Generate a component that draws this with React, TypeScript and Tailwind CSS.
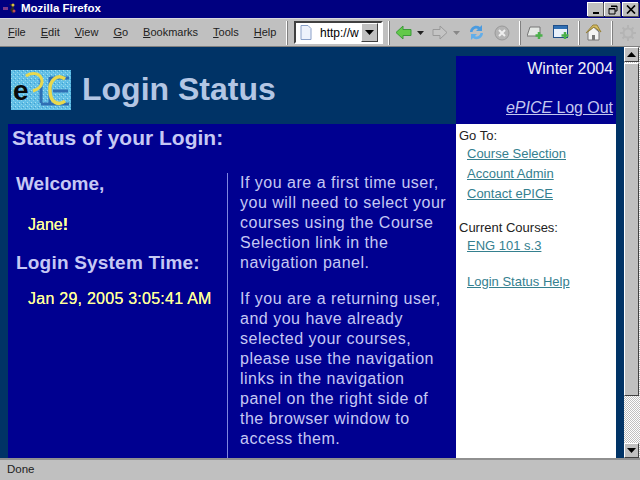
const menuItems = ["File", "Edit", "View", "Go", "Bookmarks", "Tools", "Help"];

function Separator({ ml, mr }: { ml: string; mr: string }) {
  return <div className={`h-[24px] w-[2px] border-l border-white bg-[#808080] ${ml} ${mr}`} />;
}

function DropArrow({ color }: { color: string }) {
  return (
    <svg width="7" height="4" viewBox="0 0 7 4" className="mx-[5px]">
      <path d="M0 0h7L3.5 4z" fill={color} />
    </svg>
  );
}

function WinButton({ children, ml }: { children: React.ReactNode; ml: string }) {
  return (
    <div className={`flex h-[14px] w-[16px] items-center justify-center border-t border-l border-t-white border-l-white bg-[#c0c0c0] shadow-[1px_1px_0_#555] ${ml}`}>
      {children}
    </div>
  );
}

function Logo() {
  return (
    <svg width="60" height="40" viewBox="0 0 60 40" className="shrink-0">
      <defs>
        <pattern id="speck" width="4" height="4" patternUnits="userSpaceOnUse">
          <rect width="4" height="4" fill="#62bfe6" />
          <rect width="1" height="1" fill="#a6e0f2" />
          <rect x="2" y="2" width="1" height="1" fill="#8fd5ee" />
          <rect x="3" y="1" width="1" height="1" fill="#3f9fd0" />
        </pattern>
      </defs>
      <rect width="60" height="40" fill="url(#speck)" />
      <path d="M30 8v25M39 7v26M30 34h28M39 8h19M42 21h15" fill="none" stroke="#2f6fb4" strokeWidth="3" />
      <path d="M15 6 C20 2 30 2 31 11 C31 17 27 19 22 21" fill="none" stroke="#e8d84e" strokeWidth="3" />
      <path d="M54 9 C46 3 38 11 39 21 C39 33 48 36 54 31" fill="none" stroke="#e8d84e" strokeWidth="3.5" />
      <text x="2" y="30" fontFamily="Liberation Sans, sans-serif" fontSize="28" fontWeight="bold" fill="#0a0a0a">e</text>
    </svg>
  );
}

function SideLink({ children, mt }: { children: React.ReactNode; mt: string }) {
  return <a className={`ml-[8px] block h-[20px] leading-[20px] text-[#35808f] underline ${mt}`}>{children}</a>;
}

export default function App() {
  return (
    <div className="flex h-[480px] w-[640px] flex-col overflow-hidden bg-[#c0c0c0] font-['Liberation_Sans',sans-serif]">
      {/* barre de titre */}
      <div className="flex h-[18px] items-center bg-[#000080] pl-[2px] pr-[2px]">
        <svg width="15" height="14" viewBox="0 0 15 14">
          <path d="M1 5h5v3H1z" fill="#7a3a8a" />
          <path d="M7 2l3 3-2 3 3 4 1-6-2-4z" fill="#2a2a2a" />
          <circle cx="11" cy="3" r="1.5" fill="#d8c040" />
          <circle cx="12" cy="9" r="1.5" fill="#c05050" />
        </svg>
        <span className="ml-[4px] text-[11.5px] font-bold text-white">Mozilla Firefox</span>
        <div className="flex-1" />
        <WinButton ml="ml-0">
          <div className="mt-[7px] h-[2px] w-[6px] bg-black" />
        </WinButton>
        <WinButton ml="ml-[1px]">
          <svg width="10" height="10" viewBox="0 0 10 10">
            <path d="M3 1h6v5H7M1 3.5h6V9H1z" fill="none" stroke="#000" />
            <path d="M3 1.5h6M1 4h6" stroke="#000" />
          </svg>
        </WinButton>
        <WinButton ml="ml-[2px]">
          <svg width="10" height="9" viewBox="0 0 10 9">
            <path d="M1 0.5l8 8M9 0.5l-8 8" stroke="#000" strokeWidth="1.7" />
          </svg>
        </WinButton>
      </div>

      {/* barre d'outils */}
      <div className="flex h-[29px] items-center border-t border-b border-t-[#d8d8e0] border-b-[#808080] pl-[8px]">
        <div className="flex w-[277px] gap-[15px] text-[11px] text-[#222]">
          {menuItems.map((item) => (
            <span key={item}>
              <span className="underline">{item[0]}</span>
              {item.slice(1)}
            </span>
          ))}
        </div>
        <Separator ml="ml-[1px]" mr="mr-[6px]" />
        <div className="flex h-[23px] w-[89px] items-center border-2 border-t-[#404040] border-l-[#404040] border-r-white border-b-white bg-white">
          <svg width="12" height="15" viewBox="0 0 12 15" className="ml-[4px]">
            <path d="M1 .5h7l3 3v11H1z" fill="#eef2fb" stroke="#8aa0c8" />
          </svg>
          <span className="ml-[8px] w-[41px] overflow-hidden text-[12px] whitespace-nowrap text-black">http://w</span>
          <div className="flex h-[19px] w-[17px] items-center justify-center border border-t-white border-l-white border-r-[#404040] border-b-[#404040] bg-[#c0c0c0]">
            <svg width="9" height="5" viewBox="0 0 9 5">
              <path d="M0 0h9L4.5 5z" fill="#000" />
            </svg>
          </div>
        </div>
        <Separator ml="ml-[5px]" mr="mr-[5px]" />
        <svg width="17" height="15" viewBox="0 0 17 15">
          <path d="M1 7.500 8 1v3.500h8v6H8V14z" fill="#62c94a" stroke="#3d9a3a" />
        </svg>
        <DropArrow color="#222" />
        <svg width="16" height="15" viewBox="0 0 16 15" className="ml-[3px]">
          <path d="M15 7.500 8 1v3.500H1v6h7V14z" fill="#c4c4c4" stroke="#999" />
        </svg>
        <DropArrow color="#888" />
        <svg width="17" height="17" viewBox="0 0 17 17" className="ml-[3px]">
          <path d="M2 8C2 3 8 0 12 3l2-2v6H8l2-2C8 3.500 5 5 4.500 8z" fill="#4a9be0" />
          <path d="M15 9c0 5-6 8-10 5l-2 2v-6h6l-2 2c2 1.500 5 0 5.500-3z" fill="#62aeea" />
        </svg>
        <svg width="16" height="16" viewBox="0 0 16 16" className="ml-[9px]">
          <circle cx="8" cy="8" r="7" fill="#b4b4b4" stroke="#999" />
          <path d="M5 5l6 6M11 5l-6 6" stroke="#eee" strokeWidth="2" />
        </svg>
        <Separator ml="ml-[9px]" mr="mr-[6px]" />
        <svg width="16" height="14" viewBox="0 0 16 14">
          <path d="M3 1h10v9H0z" fill="#e4e8e4" stroke="#777" />
          <path d="M12 6v7M8.500 9.500h7" stroke="#4ab04a" strokeWidth="2.500" />
        </svg>
        <svg width="16" height="15" viewBox="0 0 16 15" className="ml-[10px]">
          <rect x=".5" y=".5" width="14" height="12" fill="#e8f0fa" stroke="#1f4e88" />
          <rect x="1" y="1" width="13" height="3" fill="#2f6fb4" />
          <path d="M12 7v7M8.500 10.500h7" stroke="#4ab04a" strokeWidth="2.500" />
        </svg>
        <Separator ml="ml-[9px]" mr="mr-[5px]" />
        <svg width="17" height="17" viewBox="0 0 17 17">
          <path d="M3 8v8h11V8L8.500 3z" fill="#f4f4f4" stroke="#777" />
          <path d="M1 9 8 1h4l4 7-7-5z" fill="#d8bf62" stroke="#97813a" />
          <rect x="7" y="11" width="3" height="5" fill="#777" />
        </svg>
        <Separator ml="ml-[9px]" mr="mr-[7px]" />
        <svg width="16" height="16" viewBox="0 0 16 16">
          <circle cx="8" cy="8" r="4.500" fill="none" stroke="#b4b4b4" strokeWidth="2" />
          <path d="M8 0v3M8 13v3M0 8h3M13 8h3M2.500 2.500l2 2M11.500 11.500l2 2M13.500 2.500l-2 2M4.500 11.500l-2 2" stroke="#b4b4b4" strokeWidth="2" />
        </svg>
      </div>

      {/* page */}
      <div className="flex h-[411px]">
        <div className="flex w-[624px] flex-col bg-[#003366]">
          <div className="flex h-[77px]">
            <div className="flex flex-1 items-start pl-[11px] pt-[23px]">
              <Logo />
              <h1 className="ml-[11px] -mt-px text-[32px] leading-[40px] font-bold text-[#b3c6e4]">Login Status</h1>
            </div>
            <div className="mt-[9px] mr-[8px] w-[160px] bg-[#000090] pr-[3px] text-right text-[16px] tracking-[-0.05px]">
              <p className="mt-[4px] leading-[18px] text-[#f0f0f8]">Winter 2004</p>
              <p className="mt-[21px] leading-[18px] text-[#c4c8f0] underline">
                <i>ePICE</i> Log Out
              </p>
            </div>
          </div>
          <div className="mx-[8px] flex flex-1">
            <div className="flex w-[448px] flex-col bg-[#000090] text-[#c6c8f4]">
              <h2 className="ml-[4px] mt-[2px] text-[21px] leading-[24px] font-bold">Status of your Login:</h2>
              <div className="mt-[23px] flex flex-1">
                <div className="w-[219px] pl-[8px]">
                  <p className="mt-[1px] text-[19px] leading-[20px] font-bold">Welcome,</p>
                  <p className="ml-[12px] mt-[21px] text-[16px] leading-[20px] text-[#ffff99] [text-shadow:0_0_0.6px_#ffff99]">
                    Jane<b className="font-bold">!</b>
                  </p>
                  <p className="mt-[18px] text-[19px] leading-[20px] font-bold tracking-[0.2px]">Login System Time:</p>
                  <p className="ml-[12px] mt-[16px] text-[16px] leading-[20px] tracking-[0.25px] text-[#ffff99] [text-shadow:0_0_0.6px_#ffff99]">Jan 29, 2005 3:05:41 AM</p>
                </div>
                <div className="flex-1 border-l border-[#7f86e0] pl-[12px] pr-[7px] text-[16px] leading-[20px] tracking-[0.5px]">
                  <p>If you are a first time user, you will need to select your courses using the Course Selection link in the navigation panel.</p>
                  <p className="mt-[16px]">If you are a returning user, and you have already selected your courses, please use the navigation links in the navigation panel on the right side of the browser window to access them.</p>
                </div>
              </div>
            </div>
            <div className="w-[160px] bg-white pl-[3px] pt-[4px] text-[13px] text-[#222]">
              <p className="h-[16px] leading-[16px]">Go To:</p>
              <SideLink mt="mt-0">Course Selection</SideLink>
              <SideLink mt="mt-0">Account Admin</SideLink>
              <SideLink mt="mt-0">Contact ePICE</SideLink>
              <p className="mt-[16px] h-[16px] leading-[16px]">Current Courses:</p>
              <SideLink mt="mt-0">ENG 101 s.3</SideLink>
              <SideLink mt="mt-[16px]">Login Status Help</SideLink>
            </div>
          </div>
        </div>

        {/* ascenseur */}
        <div className="flex w-[16px] flex-col bg-[repeating-conic-gradient(#c0c0c0_0%_25%,#ffffff_0%_50%)] bg-[length:2px_2px] pr-[1px]">
          <div className="flex h-[15px] items-center justify-center border border-t-white border-l-white border-r-[#404040] border-b-[#404040] bg-[#c0c0c0]">
            <svg width="9" height="5" viewBox="0 0 9 5">
              <path d="M0 5h9L4.500 0z" fill="#000" />
            </svg>
          </div>
          <div className="mt-[1px] h-[333px] border border-t-white border-l-white border-r-[#404040] border-b-[#404040] bg-[#c0c0c0]" />
          <div className="flex-1" />
          <div className="flex h-[15px] items-center justify-center border border-t-white border-l-white border-r-[#404040] border-b-[#404040] bg-[#c0c0c0]">
            <svg width="9" height="5" viewBox="0 0 9 5">
              <path d="M0 0h9L4.500 5z" fill="#000" />
            </svg>
          </div>
        </div>
      </div>

      {/* barre d'etat */}
      <div className="flex flex-1 items-center border-t-2 border-t-[#909090] pl-[7px] text-[11.5px] text-[#222]">Done</div>
    </div>
  );
}
